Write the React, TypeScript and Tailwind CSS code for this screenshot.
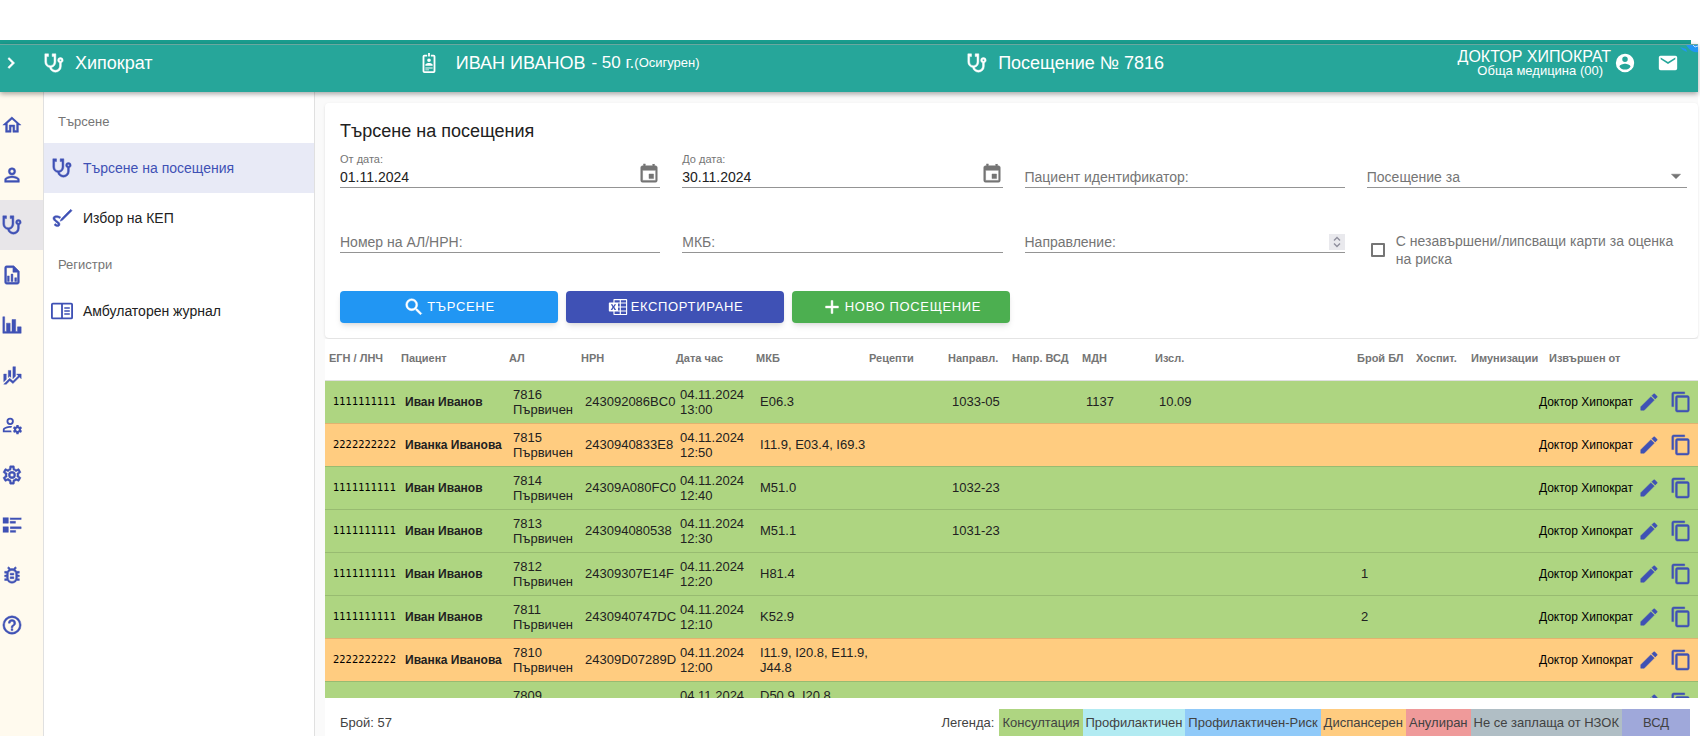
import { useState } from "react";

const icons = {
  chevron: "M8.59,16.58L13.17,12L8.59,7.41L10,6L16,12L10,18L8.59,16.58Z",
  stethoscope:
    "M19,8C19.56,8 20,8.43 20,9A1,1 0 0,1 19,10C18.43,10 18,9.55 18,9C18,8.43 18.43,8 19,8M2,2V11C2,13.96 4.19,16.5 7.14,16.91C7.76,19.92 10.42,22 13.5,22A6.5,6.5 0 0,0 20,15.5V11.81C21.16,11.39 22,10.29 22,9A3,3 0 0,0 19,6A3,3 0 0,0 16,9C16,10.29 16.84,11.4 18,11.81V15.41C18,17.91 16,19.91 13.5,19.91C11.5,19.91 9.82,18.7 9.22,16.9C12,16.3 14,13.8 14,11V2H10V5H12V11A4,4 0 0,1 8,15A4,4 0 0,1 4,11V5H6V2H2Z",
  home: "M12 5.69L17 10.19V18H15V12H9V18H7V10.19L12 5.69M12 3L2 12H5V20H11V14H13V20H19V12H22",
  account:
    "M12,4A4,4 0 0,1 16,8A4,4 0 0,1 12,12A4,4 0 0,1 8,8A4,4 0 0,1 12,4M12,6A2,2 0 0,0 10,8A2,2 0 0,0 12,10A2,2 0 0,0 14,8A2,2 0 0,0 12,6M12,13C14.67,13 20,14.33 20,17V20H4V17C4,14.33 9.33,13 12,13M12,14.9C9.03,14.9 5.9,16.36 5.9,17V18.1H18.1V17C18.1,16.36 14.97,14.9 12,14.9Z",
  fileChart:
    "M14,2H6A2,2 0 0,0 4,4V20A2,2 0 0,0 6,22H18A2,2 0 0,0 20,20V8L14,2M18,20H6V4H13V9H18V20M9,13V19H7V13H9M15,15V19H17V15H15M11,11V19H13V11H11Z",
  chartBar: "M22,21H2V3H4V19H6V10H10V19H12V6H16V19H18V14H22V21Z",
  finance:
    "M6,16.5L3,19.44V11H6M11,14.66L9.43,13.32L8,14.64V7H11M16,13L13,16V3H16M18.81,12.81L17,11H22V16L20.21,14.21L13,21.36L9.53,18.34L5.75,22H3L9.47,15.66L13,18.64",
  accountCog:
    "M10 4A4 4 0 0 0 6 8A4 4 0 0 0 10 12A4 4 0 0 0 14 8A4 4 0 0 0 10 4M10 6A2 2 0 0 1 12 8A2 2 0 0 1 10 10A2 2 0 0 1 8 8A2 2 0 0 1 10 6M17 12C16.87 12 16.76 12.09 16.74 12.21L16.55 13.53C16.25 13.66 15.96 13.82 15.7 14L14.46 13.5C14.35 13.5 14.22 13.5 14.15 13.63L13.15 15.36C13.09 15.47 13.11 15.6 13.21 15.68L14.27 16.5C14.25 16.67 14.24 16.83 14.24 17C14.24 17.17 14.25 17.33 14.27 17.5L13.21 18.32C13.12 18.4 13.09 18.53 13.15 18.64L14.15 20.37C14.21 20.5 14.34 20.5 14.46 20.5L15.7 20C15.96 20.18 16.24 20.35 16.55 20.47L16.74 21.79C16.76 21.91 16.86 22 17 22H19C19.11 22 19.22 21.91 19.24 21.79L19.43 20.47C19.73 20.34 20 20.18 20.27 20L21.5 20.5C21.63 20.5 21.76 20.5 21.83 20.37L22.83 18.64C22.89 18.53 22.86 18.4 22.77 18.32L21.7 17.5C21.72 17.33 21.74 17.17 21.74 17C21.74 16.83 21.73 16.67 21.7 16.5L22.76 15.68C22.85 15.6 22.88 15.47 22.82 15.36L21.82 13.63C21.76 13.5 21.63 13.5 21.5 13.5L20.27 14C20 13.82 19.73 13.65 19.42 13.53L19.23 12.21C19.22 12.09 19.11 12 19 12H17M10 13C7.33 13 2 14.33 2 17V20H11.67C11.39 19.41 11.19 18.77 11.09 18.1H3.9V17C3.9 16.36 7.03 14.9 10 14.9C10.43 14.9 10.87 14.94 11.3 15C11.5 14.36 11.77 13.76 12.12 13.21C11.34 13.08 10.6 13 10 13M18.04 15.5C18.84 15.5 19.5 16.16 19.5 17.03C19.5 17.87 18.84 18.53 18.04 18.53C17.2 18.53 16.54 17.87 16.54 17.03C16.54 16.16 17.2 15.5 18.04 15.5Z",
  cog: "M12,8A4,4 0 0,1 16,12A4,4 0 0,1 12,16A4,4 0 0,1 8,12A4,4 0 0,1 12,8M12,10A2,2 0 0,0 10,12A2,2 0 0,0 12,14A2,2 0 0,0 14,12A2,2 0 0,0 12,10M10,22C9.75,22 9.54,21.82 9.5,21.58L9.13,18.93C8.5,18.68 7.96,18.34 7.44,17.94L4.95,18.95C4.73,19.03 4.46,18.95 4.34,18.73L2.34,15.27C2.21,15.05 2.27,14.78 2.46,14.63L4.57,12.97L4.5,12L4.57,11L2.46,9.37C2.27,9.22 2.21,8.95 2.34,8.73L4.34,5.27C4.46,5.05 4.73,4.96 4.95,5.05L7.44,6.05C7.96,5.66 8.5,5.32 9.13,5.07L9.5,2.42C9.54,2.18 9.75,2 10,2H14C14.25,2 14.46,2.18 14.5,2.42L14.87,5.07C15.5,5.32 16.04,5.66 16.56,6.05L19.05,5.05C19.27,4.96 19.54,5.05 19.66,5.27L21.66,8.73C21.79,8.95 21.73,9.22 21.54,9.37L19.43,11L19.5,12L19.43,13L21.54,14.63C21.73,14.78 21.79,15.05 21.66,15.27L19.66,18.73C19.54,18.95 19.27,19.04 19.05,18.95L16.56,17.95C16.04,18.34 15.5,18.68 14.87,18.93L14.5,21.58C14.46,21.82 14.25,22 14,22H10M11.25,4L10.88,6.61C9.68,6.86 8.62,7.5 7.85,8.39L5.44,7.35L4.69,8.65L6.8,10.2C6.4,11.37 6.4,12.64 6.8,13.8L4.68,15.36L5.43,16.66L7.86,15.62C8.63,16.5 9.68,17.14 10.87,17.38L11.24,20H12.76L13.13,17.39C14.32,17.14 15.37,16.5 16.14,15.62L18.57,16.66L19.32,15.36L17.2,13.81C17.6,12.64 17.6,11.37 17.2,10.2L19.31,8.65L18.56,7.35L16.15,8.39C15.38,7.5 14.32,6.86 13.12,6.62L12.75,4H11.25Z",
  listText: "M2 14H8V20H2M16 8H10V10H16M2 10H8V4H2M10 4V6H22V4M10 20H16V18H10M10 16H22V14H10",
  bug: "M20,8H17.19C16.74,7.2 16.12,6.5 15.37,6L17,4.41L15.59,3L13.42,5.17C12.96,5.06 12.5,5 12,5C11.5,5 11.05,5.06 10.59,5.17L8.41,3L7,4.41L8.62,6C7.87,6.5 7.26,7.21 6.81,8H4V10H6.09C6.03,10.33 6,10.66 6,11V12H4V14H6V15C6,15.34 6.03,15.67 6.09,16H4V18H6.81C8.47,20.87 12.14,21.84 15,20.18C15.91,19.66 16.67,18.9 17.19,18H20V16H17.91C17.97,15.67 18,15.34 18,15V14H20V12H18V11C18,10.66 17.97,10.33 17.91,10H20V8M16,15A4,4 0 0,1 12,19A4,4 0 0,1 8,15V11A4,4 0 0,1 12,7A4,4 0 0,1 16,11V15M14,10V12H10V10H14M10,14H14V16H10V14Z",
  help: "M11,18H13V16H11V18M12,2A10,10 0 0,0 2,12A10,10 0 0,0 12,22A10,10 0 0,0 22,12A10,10 0 0,0 12,2M12,20C7.59,20 4,16.41 4,12C4,7.59 7.59,4 12,4C16.41,4 20,7.59 20,12C20,16.41 16.41,20 12,20M12,6A4,4 0 0,0 8,10H10A2,2 0 0,1 12,8A2,2 0 0,1 14,10C14,12 11,11.75 11,15H13C13,12.75 16,12.5 16,10A4,4 0 0,0 12,6Z",
  badge:
    "M17,3H14V5H17V21H7V5H10V3H7A2,2 0 0,0 5,5V21A2,2 0 0,0 7,23H17A2,2 0 0,0 19,21V5A2,2 0 0,0 17,3M12,7A2,2 0 0,1 14,9A2,2 0 0,1 12,11A2,2 0 0,1 10,9A2,2 0 0,1 12,7M16,15H8V14C8,12.67 10.67,12 12,12C13.33,12 16,12.67 16,14V15M16,18H8V17H16V18M12,20H8V19H12V20M13,5H11V1H13V5Z",
  accountCircle:
    "M12,19.2C9.5,19.2 7.29,17.92 6,16C6.03,14 10,12.9 12,12.9C14,12.9 17.97,14 18,16C16.71,17.92 14.5,19.2 12,19.2M12,5A3,3 0 0,1 15,8A3,3 0 0,1 12,11A3,3 0 0,1 9,8A3,3 0 0,1 12,5M12,2A10,10 0 0,0 2,12A10,10 0 0,0 12,22A10,10 0 0,0 22,12C22,6.47 17.5,2 12,2Z",
  email: "M20,8L12,13L4,8V6L12,11L20,6M20,4H4C2.89,4 2,4.89 2,6V18A2,2 0 0,0 4,20H20A2,2 0 0,0 22,18V6C22,4.89 21.1,4 20,4Z",
  calendar:
    "M19,19H5V8H19M16,1V3H8V1H6V3H5C3.89,3 3,3.89 3,5V19A2,2 0 0,0 5,21H19A2,2 0 0,0 21,19V5C21,3.89 20.1,3 19,3H18V1M17,12H12V17H17V12Z",
  magnify:
    "M9.5,3A6.5,6.5 0 0,1 16,9.5C16,11.11 15.41,12.59 14.44,13.73L14.71,14H15.5L20.5,19L19,20.5L14,15.5V14.71L13.73,14.44C12.59,15.41 11.11,16 9.5,16A6.5,6.5 0 0,1 3,9.5A6.5,6.5 0 0,1 9.5,3M9.5,5C7,5 5,7 5,9.5C5,12 7,14 9.5,14C12,14 14,12 14,9.5C14,7 12,5 9.5,5Z",
  excel:
    "M21.17 3.25Q21.5 3.25 21.76 3.5 22 3.74 22 4.08V19.92Q22 20.26 21.76 20.5 21.5 20.75 21.17 20.75H7.83Q7.5 20.75 7.24 20.5 7 20.26 7 19.92V17H2.83Q2.5 17 2.24 16.76 2 16.5 2 16.17V7.83Q2 7.5 2.24 7.24 2.5 7 2.83 7H7V4.08Q7 3.74 7.24 3.5 7.5 3.25 7.83 3.25M7 13.06L8.18 15.28H9.97L8 12.06L9.93 8.89H8.22L7.13 10.9L7.09 10.96L7.06 11.03Q6.8 10.5 6.5 9.96 6.25 9.43 5.97 8.89H4.16L6.05 12.08L4 15.28H5.78M13.88 19.5V17H8.25V19.5M13.88 15.75V12.63H12V15.75M13.88 11.38V8.25H12V11.38M13.88 7V4.5H8.25V7M20.75 19.5V17H15.13V19.5M20.75 15.75V12.63H15.13V15.75M20.75 11.38V8.25H15.13V11.38M20.75 7V4.5H15.13V7Z",
  plus: "M19,13H13V19H11V13H5V11H11V5H13V11H19V13Z",
  pencil:
    "M20.71,7.04C21.1,6.65 21.1,6 20.71,5.63L18.37,3.29C18,2.9 17.35,2.9 16.96,3.29L15.12,5.12L18.87,8.87M3,17.25V21H6.75L17.81,9.93L14.06,6.18L3,17.25Z",
  copy: "M19,21H8V7H19M19,5H8A2,2 0 0,0 6,7V21A2,2 0 0,0 8,23H19A2,2 0 0,0 21,21V7A2,2 0 0,0 19,5M16,1H4A2,2 0 0,0 2,3V17H4V3H16V1Z",
  sign: "M21.5 2.5L23 4L12.5 14.5L10 15.5L11 13L16 8ZM9.6 19.8C10.6 18 8.6 16.4 6.6 15C5.2 14 3.8 12.8 4.6 12C5.6 11 8.2 11.8 9.6 12.6L10.6 10.8C8.4 9.6 4.6 8.6 2.8 10.6C1 13 3.4 15 5.4 16.5C6.6 17.4 8 18.4 7.6 19C6.8 19.8 5.6 18.8 4.6 18L3.4 19.6C5.4 21.4 8.4 22.4 9.6 19.8Z",
  journal:
    "M2 3H22A2 2 0 0 1 24 5V19A2 2 0 0 1 22 21H2A2 2 0 0 1 0 19V5A2 2 0 0 1 2 3M2 5V19H11V5H2M13 5V19H22V5H13M14.5 8H20.5V9.6H14.5V8M14.5 11.2H20.5V12.8H14.5V11.2M14.5 14.4H20.5V16H14.5V14.4Z",
  menuDown: "M7,10L12,15L17,10H7Z",
};

type IconName = keyof typeof icons;

// these have fine inner detail that a heavier outline would close up
const thin: IconName[] = ["excel", "badge", "accountCircle", "email", "journal", "accountCog"];

function Icon({ name, className = "size-[22px]" }: { name: IconName; className?: string }) {
  return (
    <svg
      viewBox="0 0 24 24"
      fill="currentColor"
      stroke="currentColor"
      strokeWidth={thin.includes(name) ? 0 : 0.5}
      fillRule={name === "journal" ? "evenodd" : "nonzero"}
      aria-hidden="true"
      className={`shrink-0 overflow-visible ${className}`}
    >
      <path d={icons[name]} />
    </svg>
  );
}

const rail: { icon: IconName; label: string; active?: boolean }[] = [
  { icon: "home", label: "Начало" },
  { icon: "account", label: "Пациенти" },
  { icon: "stethoscope", label: "Посещения", active: true },
  { icon: "fileChart", label: "Отчети" },
  { icon: "chartBar", label: "Статистика" },
  { icon: "finance", label: "Анализи" },
  { icon: "accountCog", label: "Потребители" },
  { icon: "cog", label: "Настройки" },
  { icon: "listText", label: "Номенклатури" },
  { icon: "bug", label: "Проблеми" },
  { icon: "help", label: "Помощ" },
];

interface Visit {
  egn: string;
  patient: string;
  al: string;
  nrn: string;
  time: string;
  icd: string;
  referral?: string;
  mdn?: string;
  exam?: string;
  sickLeave?: string;
  kind: "consult" | "dispensary";
}

const visits: Visit[] = [
  { egn: "1111111111", patient: "Иван Иванов", al: "7816", nrn: "243092086BC0", time: "13:00", icd: "E06.3", referral: "1033-05", mdn: "1137", exam: "10.09", kind: "consult" },
  { egn: "2222222222", patient: "Иванка Иванова", al: "7815", nrn: "2430940833E8", time: "12:50", icd: "I11.9, E03.4, I69.3", kind: "dispensary" },
  { egn: "1111111111", patient: "Иван Иванов", al: "7814", nrn: "24309A080FC0", time: "12:40", icd: "M51.0", referral: "1032-23", kind: "consult" },
  { egn: "1111111111", patient: "Иван Иванов", al: "7813", nrn: "243094080538", time: "12:30", icd: "M51.1", referral: "1031-23", kind: "consult" },
  { egn: "1111111111", patient: "Иван Иванов", al: "7812", nrn: "24309307E14F", time: "12:20", icd: "H81.4", sickLeave: "1", kind: "consult" },
  { egn: "1111111111", patient: "Иван Иванов", al: "7811", nrn: "2430940747DC", time: "12:10", icd: "K52.9", sickLeave: "2", kind: "consult" },
  { egn: "2222222222", patient: "Иванка Иванова", al: "7810", nrn: "24309D07289D", time: "12:00", icd: "I11.9, I20.8, E11.9, J44.8", kind: "dispensary" },
  { egn: "", patient: "", al: "7809", nrn: "", time: "11:50", icd: "D50.9, I20.8, M17.0", kind: "consult" },
];

const legend = [
  { text: "Консултация", className: "bg-[#aed581]" },
  { text: "Профилактичен", className: "bg-[#b2ebf2]" },
  { text: "Профилактичен-Риск", className: "bg-[#90caf9]" },
  { text: "Диспансерен", className: "bg-[#ffcc80]" },
  { text: "Анулиран", className: "bg-[#ef9a9a]" },
  { text: "Не се заплаща от НЗОК", className: "bg-[#b0bec5]" },
  { text: "ВСД", className: "bg-[#9fa8da] w-[68px] text-center" },
];

function NavItem({ icon, text, active }: { icon: IconName; text: string; active?: boolean }) {
  return (
    <a
      href="#"
      className={`flex h-[50px] items-center gap-[10px] pl-[7px] text-sm ${active ? "bg-[#e8eaf6] text-[#3f51b5]" : "text-[#212121]"}`}
    >
      <Icon name={icon} className="size-[22px] text-[#3f51b5]" />
      {text}
    </a>
  );
}

function DateField({ id, label, value }: { id: string; label: string; value: string }) {
  return (
    <div className="flex h-10 items-end border-b border-[#949494]">
      <div className="min-w-0 flex-1">
        <label htmlFor={id} className="block text-[11px] leading-4 text-[#757575]">{label}</label>
        <input id={id} defaultValue={value} className="block h-5 w-full bg-transparent text-sm text-[#212121] outline-none" />
      </div>
      <button aria-label="Избор на дата" className="mb-[2px] text-[#757575]">
        <Icon name="calendar" />
      </button>
    </div>
  );
}

function TextField({ id, label, type = "text" }: { id: string; label: string; type?: string }) {
  return (
    <div className="flex h-10 items-end border-b border-[#949494]">
      <label htmlFor={id} className="text-sm leading-5 text-[#757575]">{label}</label>
      <input id={id} type={type} className="h-5 min-w-0 flex-1 bg-transparent text-sm outline-none [appearance:textfield]" />
      {type === "number" && (
        <button aria-label="Промяна на стойността" className="mb-[2px] flex h-4 w-4 items-center justify-center bg-[#e9e9ed] text-[#8f8f9d]">
          <svg viewBox="0 0 16 16" className="size-4" fill="none" stroke="currentColor" strokeWidth={1.4}>
            <path d="M5 6.5L8 3.5L11 6.5M5 9.5L8 12.5L11 9.5" />
          </svg>
        </button>
      )}
    </div>
  );
}

function ActionButton({ icon, text, className }: { icon: IconName; text: string; className: string }) {
  return (
    <button className={`flex h-8 w-[218px] items-center justify-center gap-[2px] rounded text-[13px] tracking-wider text-white shadow-md ${className}`}>
      <Icon name={icon} />
      {text}
    </button>
  );
}

const headers = ["ЕГН / ЛНЧ", "Пациент", "АЛ", "НРН", "Дата час", "МКБ", "Рецепти", "Направл.", "Напр. ВСД", "МДН", "Изсл.", "Брой БЛ", "Хоспит.", "Имунизации", "Извършен от"];

function VisitsTable() {
  return (
    <table className="w-full table-fixed border-collapse whitespace-nowrap text-[13px] leading-[15px] text-[#212121]">
      <colgroup>
        <col className="w-[72px]" />
        <col className="w-[108px]" />
        <col className="w-[72px]" />
        <col className="w-[95px]" />
        <col className="w-[80px]" />
        <col className="w-[113px]" />
        <col className="w-[79px]" />
        <col className="w-[64px]" />
        <col className="w-[70px]" />
        <col className="w-[73px]" />
        <col />
        <col className="w-[59px]" />
        <col className="w-[55px]" />
        <col className="w-[78px]" />
        <col className="w-[92px]" />
        <col className="w-[27px]" />
        <col className="w-[34px]" />
      </colgroup>
      <thead>
        <tr className="h-[41px] border-b border-[#e0e0e0] bg-white text-left text-[11px] text-[#757575]">
          {headers.map((h) => (
            <th key={h} className="pb-[2px] pl-1 font-bold">{h}</th>
          ))}
          <th aria-label="Редакция" />
          <th aria-label="Копиране" />
        </tr>
      </thead>
      <tbody>
        {visits.map((v) => (
          <tr key={v.al} className={`h-[43px] border-b border-black/12 ${v.kind === "consult" ? "bg-[#aed581]" : "bg-[#ffcc80]"}`}>
            <td className="pl-2 font-['DejaVu_Sans_Condensed','DejaVu_Sans',sans-serif] text-[11px] text-black">{v.egn}</td>
            <td className="pl-2 text-xs font-bold">{v.patient}</td>
            <td className="pl-2">{v.al}<br />Първичен</td>
            <td className="pl-2">{v.nrn}</td>
            <td className="pl-2">04.11.2024<br />{v.time}</td>
            {/* long code lists run into the empty prescriptions column */}
            <td colSpan={2} className="whitespace-normal pl-2 pr-[71px]">{v.icd}</td>
            <td className="pl-2">{v.referral}</td>
            <td />
            <td className="pl-2">{v.mdn}</td>
            <td className="pl-2">{v.exam}</td>
            <td className="pl-2">{v.sickLeave}</td>
            <td />
            <td />
            <td className="text-xs text-black">
              <span className="float-right pr-1">Доктор Хипократ</span>
            </td>
            <td className="text-[#3f51b5]">
              <button aria-label="Редакция" className="block pl-px"><Icon name="pencil" /></button>
            </td>
            <td className="text-[#3f51b5]">
              <button aria-label="Копиране" className="block pl-[6px]"><Icon name="copy" /></button>
            </td>
          </tr>
        ))}
      </tbody>
    </table>
  );
}

export default function App() {
  const [risk, setRisk] = useState(false);

  return (
    <div className="flex h-screen flex-col overflow-hidden bg-white pr-[2px] pt-10 font-['Liberation_Sans',Arial,sans-serif]">
      <div className="mr-[7px] h-1 shrink-0 bg-[#1a9e8f]" />
      <header className="relative z-10 flex h-12 shrink-0 border-t border-[#6aa79f] bg-[#26a69a] text-lg leading-5 text-white shadow-[0_2px_5px_rgba(0,0,0,0.35)]">
        <div className="flex h-9 w-[24.6%] items-center">
          <button aria-label="Меню" className="w-[43px]"><Icon name="chevron" /></button>
          <Icon name="stethoscope" />
          <h1 className="ml-[10px]">Хипократ</h1>
        </div>
        <div className="flex h-9 w-[32.3%] items-center">
          <Icon name="badge" />
          <span className="ml-4">ИВАН ИВАНОВ</span>
          <span className="ml-[6px] text-[17px]">- 50 г.</span>
          <span className="text-[13px]">(Осигурен)</span>
        </div>
        <div className="flex h-9 flex-1 items-center">
          <Icon name="stethoscope" />
          <span className="ml-[10px]">Посещение № 7816</span>
        </div>
        <div className="flex h-9 items-center">
          <div className="text-right">
            <div className="text-base leading-4">ДОКТОР ХИПОКРАТ</div>
            <div className="pr-2 text-[13px] leading-3">Обща медицина (00)</div>
          </div>
          <button aria-label="Профил" className="ml-[3px]"><Icon name="accountCircle" /></button>
          <button aria-label="Съобщения" className="ml-[21px] mr-[19px]"><Icon name="email" /></button>
        </div>
        {/* corner ribbon */}
        <svg viewBox="0 0 18 9" className="absolute -top-px right-0 h-[9px] w-[18px]" aria-hidden="true">
          <path d="M0 3L6 5L7 8L3 6ZM6 1H18V8C14 9 10 7 6 1Z" fill="#2196f3" />
          <path d="M13 1L15 3L18 2" fill="none" stroke="#bbdefb" strokeWidth="1" />
        </svg>
      </header>

      <div className="flex min-h-0 flex-1">
        <nav aria-label="Основно меню" className="w-11 shrink-0 border-r border-[#e0e0e0] bg-[#fffaee] pt-2">
          {rail.map((item) => (
            <a
              key={item.icon}
              href="#"
              aria-label={item.label}
              className={`flex h-[50px] items-center pl-px text-[#3f51b5] ${item.active ? "bg-[#e8e6e9]" : ""}`}
            >
              <Icon name={item.icon} />
            </a>
          ))}
        </nav>

        <aside className="w-[271px] shrink-0 border-r border-[#e0e0e0] pt-2">
          <h2 className="flex h-[43px] items-center pl-[14px] text-[13px] text-[#757575]">Търсене</h2>
          <NavItem icon="stethoscope" text="Търсене на посещения" active />
          <NavItem icon="sign" text="Избор на КЕП" />
          <h2 className="flex h-[43px] items-center pl-[14px] text-[13px] text-[#757575]">Регистри</h2>
          <NavItem icon="journal" text="Амбулаторен журнал" />
        </aside>

        <main className="flex min-w-0 flex-1 flex-col bg-[#fafafa] pl-[10px] pt-[11px]">
          <section className="shrink-0 rounded bg-white pb-[15px] pl-[15px] pr-[11px] pt-4 shadow">
            <h2 className="text-lg leading-6 text-[#212121]">Търсене на посещения</h2>
            <div className="mt-[5px] grid grid-cols-4 gap-x-[22px] gap-y-[25px]">
              <DateField id="from" label="От дата:" value="01.11.2024" />
              <DateField id="to" label="До дата:" value="30.11.2024" />
              <TextField id="patient" label="Пациент идентификатор:" />
              <div className="flex h-10 items-end border-b border-[#949494] text-[#757575]">
                <label htmlFor="visit-for" className="text-sm leading-5">Посещение за</label>
                <select id="visit-for" className="h-5 min-w-0 flex-1 appearance-none bg-transparent outline-none" />
                <Icon name="menuDown" className="pointer-events-none size-[22px]" />
              </div>
              <TextField id="al" label="Номер на АЛ/НРН:" />
              <TextField id="icd" label="МКБ:" />
              <TextField id="referral" label="Направление:" type="number" />
              <label className="flex items-center gap-[11px] self-start pl-1 pt-[19px] text-sm leading-[18px] text-[#757575]">
                <input
                  type="checkbox"
                  checked={risk}
                  onChange={(e) => setRisk(e.target.checked)}
                  className="size-[14px] shrink-0 appearance-none rounded-[1px] border-2 border-[#757575] checked:bg-[#757575]"
                />
                С незавършени/липсващи карти за оценка на риска
              </label>
            </div>
            <div className="mt-[23px] flex gap-2">
              <ActionButton icon="magnify" text="ТЪРСЕНЕ" className="bg-[#2196f3]" />
              <ActionButton icon="excel" text="ЕКСПОРТИРАНЕ" className="bg-[#3f51b5]" />
              <ActionButton icon="plus" text="НОВО ПОСЕЩЕНИЕ" className="bg-[#4caf50]" />
            </div>
          </section>

          <section className="mt-px flex min-h-0 flex-1 flex-col bg-white">
            <div className="min-h-0 flex-1 overflow-hidden">
              <VisitsTable />
            </div>
            <div className="flex h-[38px] shrink-0 items-end justify-between pl-[15px] pr-2 text-[13px] text-[#424242]">
              <span className="leading-[27px]">Брой: 57</span>
              <div className="flex leading-[27px]">
                <span className="mr-[5px]">Легенда:</span>
                {legend.map((l) => (
                  <span key={l.text} className={`px-[3px] ${l.className}`}>{l.text}</span>
                ))}
              </div>
            </div>
          </section>
        </main>
      </div>
    </div>
  );
}
